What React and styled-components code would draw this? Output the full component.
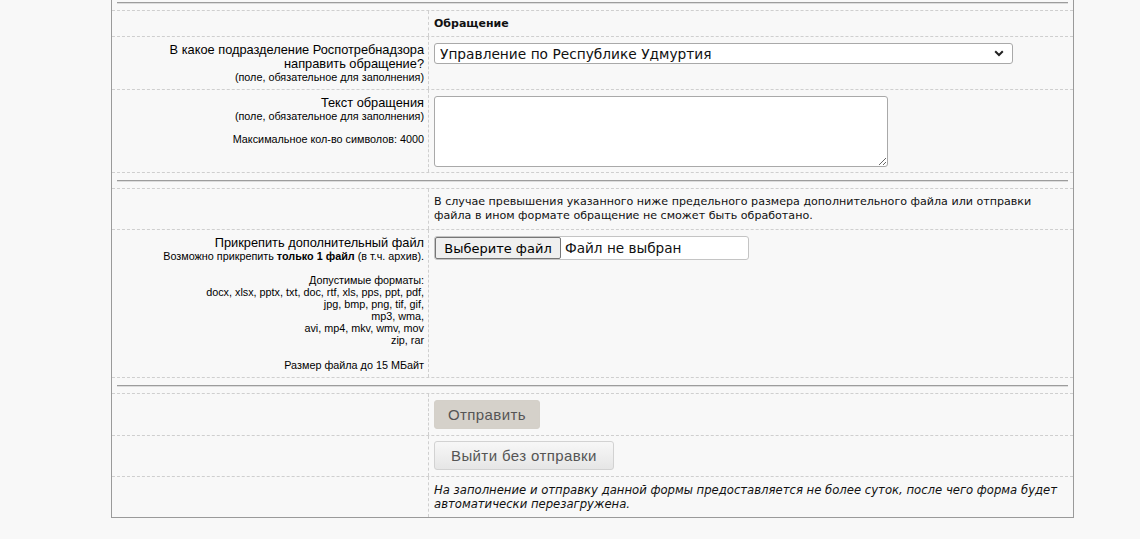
import React from "react";
import styled, { createGlobalStyle } from "styled-components";

const GlobalStyle = createGlobalStyle`
  html, body {
    margin: 0;
    padding: 0;
    background: #f8f8f8;
  }
  body {
    font-family: "Liberation Sans", Arial, sans-serif;
    color: #000;
  }
`;

const Form = styled.div`
  box-sizing: border-box;
  width: 963px;
  margin-left: 111px;
  border: 1px solid #9a9a9a;
  border-top: none;
  background: #f8f8f8;
`;

const Separator = styled.div`
  padding: ${(p) => (p.$first ? "2px 5px 6px" : "7px 5px 6px")};
  border-bottom: 1px dashed #cfcfcf;
`;

const Rule = styled.div`
  border-top: 1px solid #9c9c9c;
  border-bottom: 1px solid #dcdcdc;
`;

const Row = styled.div`
  display: grid;
  grid-template-columns: 317px 1fr;
  border-bottom: ${(p) => (p.$last ? "none" : "1px dashed #cfcfcf")};
`;

const Label = styled.div`
  box-sizing: border-box;
  border-right: 1px dashed #cfcfcf;
  text-align: right;
  padding: 6px 4px 6px;
  font-size: 12.8px;
  line-height: 14px;
`;

const Note = styled.div`
  font-size: 10.8px;
  line-height: 12px;
  margin-top: ${(p) => p.$gap || 0}px;
`;

const Cell = styled.div`
  padding: ${(p) => p.$pad || "6px 5px 6px"};
  font-family: "DejaVu Sans", Verdana, sans-serif;
  font-size: 11.1px;
  line-height: 14px;
  color: #111;
`;

const Heading = styled.div`
  font-weight: bold;
  font-size: 11px;
  line-height: 13px;
`;

const Italic = styled.div`
  font-style: italic;
  font-size: 11.65px;
`;

const SelectWrap = styled.div`
  position: relative;
  width: 579px;
`;

const Select = styled.select`
  display: block;
  box-sizing: border-box;
  width: 100%;
  height: 21px;
  padding: 0 24px 0 5px;
  appearance: none;
  background: #fff;
  border: 1px solid #a9a9a9;
  border-radius: 3px;
  font-family: "DejaVu Sans", Verdana, sans-serif;
  font-size: 13.75px;
  color: #111;
`;

const Chevron = styled.svg`
  position: absolute;
  right: 9px;
  top: 7px;
  pointer-events: none;
`;

const TextArea = styled.textarea`
  display: block;
  box-sizing: border-box;
  width: 454px;
  height: 71px;
  background: #fff;
  border: 1px solid #a9a9a9;
  border-radius: 3px;
  resize: both;
`;

const FileBox = styled.div`
  box-sizing: border-box;
  display: flex;
  align-items: center;
  width: 315px;
  height: 24px;
  background: #fff;
  border: 1px solid #c4c4c4;
  border-radius: 3px;
  font-family: "DejaVu Sans", Verdana, sans-serif;
  color: #111;
`;

const FileButton = styled.button`
  box-sizing: border-box;
  height: 22px;
  width: 126px;
  padding: 0;
  background: #efefef;
  border: 1px solid #767676;
  border-radius: 2px;
  font-family: inherit;
  font-size: 13px;
  color: #000;
`;

const FileName = styled.span`
  margin-left: 4px;
  font-size: 13.6px;
`;

const Button = styled.button`
  box-sizing: border-box;
  height: 29px;
  padding: 0 ${(p) => (p.$primary ? 13 : 16)}px;
  border: 1px solid ${(p) => (p.$primary ? "#d4d0c9" : "#d2d2d2")};
  border-radius: 3px;
  background: ${(p) =>
    p.$primary ? "#d5d1ca" : "linear-gradient(#f7f7f7, #e6e6e6)"};
  font-family: "Liberation Sans", Arial, sans-serif;
  font-size: 15px;
  letter-spacing: 0.4px;
  color: #555;
`;

export default function App() {
  return (
    <>
      <GlobalStyle />
      <Form>
        <Separator $first>
          <Rule />
        </Separator>

        <Row>
          <Label />
          <Cell $pad="6px 5px 6px">
            <Heading>Обращение</Heading>
          </Cell>
        </Row>

        <Row>
          <Label>
            В какое подразделение Роспотребнадзора
            <br />
            направить обращение?
            <Note>(поле, обязательное для заполнения)</Note>
          </Label>
          <Cell>
            <SelectWrap>
              <Select defaultValue="udm">
                <option value="udm">Управление по Республике Удмуртия</option>
              </Select>
              <Chevron width="10" height="7" viewBox="0 0 10 7">
                <path
                  d="M1.2 1.3 L5 5 L8.8 1.3"
                  fill="none"
                  stroke="#222"
                  strokeWidth="2"
                />
              </Chevron>
            </SelectWrap>
          </Cell>
        </Row>

        <Row>
          <Label>
            Текст обращения
            <Note>(поле, обязательное для заполнения)</Note>
            <Note $gap={11}>Максимальное кол-во символов: 4000</Note>
          </Label>
          <Cell $pad="6px 5px 5px">
            <TextArea />
          </Cell>
        </Row>

        <Separator>
          <Rule />
        </Separator>

        <Row>
          <Label />
          <Cell $pad="6px 5px 6px">
            В случае превышения указанного ниже предельного размера
            дополнительного файла или отправки
            <br />
            файла в ином формате обращение не сможет быть обработано.
          </Cell>
        </Row>

        <Row>
          <Label>
            Прикрепить дополнительный файл
            <Note>
              Возможно прикрепить <b>только 1 файл</b> (в т.ч. архив).
            </Note>
            <Note $gap={12}>
              Допустимые форматы:
              <br />
              docx, xlsx, pptx, txt, doc, rtf, xls, pps, ppt, pdf,
              <br />
              jpg, bmp, png, tif, gif,
              <br />
              mp3, wma,
              <br />
              avi, mp4, mkv, wmv, mov
              <br />
              zip, rar
            </Note>
            <Note $gap={13}>Размер файла до 15 МБайт</Note>
          </Label>
          <Cell>
            <FileBox>
              <FileButton type="button">Выберите файл</FileButton>
              <FileName>Файл не выбран</FileName>
            </FileBox>
          </Cell>
        </Row>

        <Separator>
          <Rule />
        </Separator>

        <Row>
          <Label />
          <Cell $pad="6px 5px 6px">
            <Button $primary type="button">
              Отправить
            </Button>
          </Cell>
        </Row>

        <Row>
          <Label />
          <Cell $pad="5px 5px 6px">
            <Button type="button">Выйти без отправки</Button>
          </Cell>
        </Row>

        <Row $last>
          <Label />
          <Cell $pad="6px 5px 6px">
            <Italic>
              На заполнение и отправку данной формы предоставляется не более
              суток, после чего форма будет
              <br />
              автоматически перезагружена.
            </Italic>
          </Cell>
        </Row>
      </Form>
    </>
  );
}
